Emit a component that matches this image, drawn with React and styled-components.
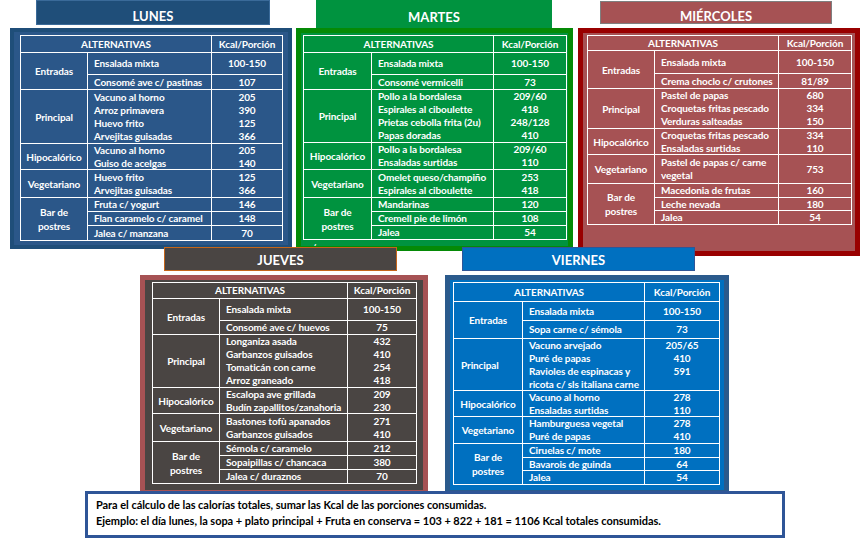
import React from 'react';
import styled, { createGlobalStyle } from 'styled-components';

const GlobalStyle = createGlobalStyle`
  html, body {
    margin: 0;
    padding: 0;
    background: #fff;
  }
  body {
    font-family: Lato, 'Liberation Sans', sans-serif;
  }
`;

const Page = styled.div`
  width: 864px;
  height: 543px;
  overflow: hidden;
  background: #fff;
`;

const TopRow = styled.div`
  display: flex;
  align-items: flex-start;
  padding-left: 10px;
`;

const BottomRow = styled.div`
  display: flex;
  align-items: flex-start;
  padding-left: 140px;
  margin-top: -9px;
`;

const DayBlock = styled.div`
  display: flex;
  flex-direction: column;
  margin-left: ${(p) => p.$ml || 0}px;
`;

const Title = styled.div`
  position: relative;
  z-index: 1;
  box-sizing: border-box;
  width: ${(p) => p.$w}px;
  height: ${(p) => p.$h}px;
  margin: ${(p) => p.$mt || 0}px 0 ${(p) => p.$mb || 0}px ${(p) => p.$off}px;
  padding-top: ${(p) => p.$pt}px;
  background: ${(p) => p.$bg};
  border: ${(p) => (p.$bd ? `1px solid ${p.$bd}` : 'none')};
  display: flex;
  justify-content: center;
  align-items: flex-start;
`;

const TitleText = styled.span`
  display: block;
  color: #fff;
  font: 700 13px/13px Lato, 'Liberation Sans', sans-serif;
  height: ${(p) => (p.$clip ? '11px' : 'auto')};
  overflow: ${(p) => (p.$clip ? 'hidden' : 'visible')};
`;

const Panel = styled.div`
  box-sizing: border-box;
  width: ${(p) => p.$w}px;
  height: ${(p) => p.$h}px;
  background: ${(p) => p.$bg};
  border: ${(p) => p.$bw}px solid ${(p) => p.$bd};
  padding: ${(p) => p.$pad};
  overflow: hidden;
  color: #fff;
  font: 700 10px/13px Lato, 'Liberation Sans', sans-serif;
  letter-spacing: -0.1px;
`;

const Table = styled.div`
  display: grid;
  grid-template-columns: ${(p) => p.$cols};
  grid-template-rows: ${(p) => p.$rows};
  width: max-content;
  border-top: 1px solid #fff;
  border-left: 1px solid #fff;
`;

const Cell = styled.div`
  box-sizing: border-box;
  border-right: 1px solid #fff;
  border-bottom: 1px solid #fff;
  display: flex;
  flex-direction: column;
  justify-content: center;
  min-width: 0;
  line-height: 13px;
`;

const HeadCell = styled(Cell)`
  grid-column: span ${(p) => p.$span};
  align-items: center;
`;

const GroupCell = styled(Cell)`
  grid-column: 1;
  grid-row: span ${(p) => p.$span};
  align-items: ${(p) => (p.$left ? 'flex-start' : 'center')};
  padding-left: ${(p) => (p.$left ? '7px' : '0')};
  text-align: ${(p) => (p.$left ? 'left' : 'center')};
  white-space: pre-line;
  line-height: 14px;
`;

const ItemCell = styled(Cell)`
  grid-column: 2;
  padding-left: 6px;
  white-space: pre-line;
`;

const KcalCell = styled(Cell)`
  grid-column: 3;
  align-items: center;
`;

const Note = styled.div`
  padding: 1px 0 0 4px;
`;

const Footer = styled.div`
  position: relative;
  z-index: 2;
  box-sizing: border-box;
  width: 700px;
  height: 47px;
  margin: -4px 0 0 85px;
  padding: 3px 8px;
  background: #fff;
  border: 3px solid #2f5597;
  color: #000;
  font: 700 11px/16px Lato, 'Liberation Sans', sans-serif;
  letter-spacing: -0.05px;
`;

const ENTRADA = 'Ensalada mixta';

const lunes = {
  title: 'LUNES',
  titleStyle: { $w: 234, $h: 25, $off: 26, $mb: 3, $pt: 9, $bg: '#1f4e79', $bd: '#3a6a99' },
  panel: { $w: 282, $h: 221, $bg: '#2b5789', $bd: '#1f4e79', $bw: 4, $pad: '3px 6px' },
  cols: [67, 124, 71],
  head: 17,
  groups: [
    { label: 'Entradas', rows: [[22, [[ENTRADA, '100-150']]], [15, [['Consomé ave c/ pastinas', '107']]]] },
    {
      label: 'Principal',
      rows: [[54, [['Vacuno al horno', '205'], ['Arroz primavera', '390'], ['Huevo frito', '125'], ['Arvejitas guisadas', '366']]]],
    },
    { label: 'Hipocalórico', rows: [[26, [['Vacuno al horno', '205'], ['Guiso de acelgas', '140']]]] },
    { label: 'Vegetariano', rows: [[28, [['Huevo frito', '125'], ['Arvejitas guisadas', '366']]]] },
    {
      label: 'Bar de\npostres',
      rows: [[14, [['Fruta c/ yogurt', '146']]], [14, [['Flan caramelo c/ caramel', '148']]], [15, [['Jalea  c/ manzana', '70']]]],
    },
  ],
};

const martes = {
  title: 'MARTES',
  clip: true,
  titleStyle: { $w: 236, $h: 28, $off: 20, $pt: 11, $bg: '#00933f' },
  panel: { $w: 277, $h: 223, $bg: '#00933f', $bd: '#058a06', $bw: 5, $pad: '2px 2px' },
  cols: [68, 122, 73],
  head: 17,
  note: 'c/',
  groups: [
    { label: 'Entradas', rows: [[22, [[ENTRADA, '100-150']]], [15, [['Consomé vermicelli', '73']]]] },
    {
      label: 'Principal',
      rows: [
        [53, [['Pollo a la bordalesa', '209/60'], ['Espirales al ciboulette', '418'], ['Prietas cebolla frita (2u)', '248/128'], ['Papas doradas', '410']]],
      ],
    },
    { label: 'Hipocalórico', rows: [[27, [['Pollo a la bordalesa', '209/60'], ['Ensaladas surtidas', '110']]]] },
    { label: 'Vegetariano', rows: [[28, [['Omelet queso/champiño', '253'], ['Espirales al ciboulette', '418']]]] },
    {
      label: 'Bar de\npostres',
      rows: [[14, [['Mandarinas', '120']]], [14, [['Cremell pie de limón', '108']]], [14, [['Jalea', '54']]]],
    },
  ],
};

const miercoles = {
  title: 'MIÉRCOLES',
  titleStyle: { $w: 232, $h: 23, $off: 22, $mt: 1, $mb: 4, $pt: 8, $bg: '#a65254', $bd: '#7f7f7f' },
  panel: { $w: 282, $h: 228, $bg: '#a65254', $bd: '#990000', $bw: 5, $pad: '2px 4px' },
  cols: [67, 124, 73],
  head: 15,
  groups: [
    { label: 'Entradas', rows: [[23, [[ENTRADA, '100-150']]], [15, [['Crema choclo c/ crutones', '81/89']]]] },
    {
      label: 'Principal',
      rows: [[40, [['Pastel de papas', '680'], ['Croquetas fritas pescado', '334'], ['Verduras salteadas', '150']]]],
    },
    { label: 'Hipocalórico', rows: [[26, [['Croquetas fritas pescado', '334'], ['Ensaladas surtidas', '110']]]] },
    { label: 'Vegetariano', rows: [[29, [['Pastel de papas c/ carne\nvegetal', '753']]]] },
    {
      label: 'Bar de\npostres',
      rows: [[14, [['Macedonia de frutas', '160']]], [13, [['Leche nevada', '180']]], [14, [['Jalea', '54']]]],
    },
  ],
};

const jueves = {
  title: 'JUEVES',
  titleStyle: { $w: 233, $h: 24, $off: 24, $mb: 4, $pt: 6, $bg: '#4a4543', $bd: '#c5651a' },
  panel: { $w: 288, $h: 220, $bg: '#4a4543', $bd: '#a65254', $bw: 5, $pad: '2px 7px' },
  cols: [67, 128, 69],
  head: 16,
  groups: [
    { label: 'Entradas', rows: [[22, [[ENTRADA, '100-150']]], [14, [['Consomé ave c/ huevos', '75']]]] },
    {
      label: 'Principal',
      rows: [[53, [['Longaniza asada', '432'], ['Garbanzos guisados', '410'], ['Tomaticán con carne', '254'], ['Arroz graneado', '418']]]],
    },
    { label: 'Hipocalórico', rows: [[26, [['Escalopa ave grillada', '209'], ['Budín zapallitos/zanahoria', '230']]]] },
    { label: 'Vegetariano', rows: [[28, [['Bastones tofù apanados', '271'], ['Garbanzos guisados', '410']]]] },
    {
      label: 'Bar de\npostres',
      rows: [[14, [['Sémola c/ caramelo', '212']]], [14, [['Sopaipillas c/ chancaca', '380']]], [14, [['Jalea c/ duraznos', '70']]]],
    },
  ],
};

const viernes = {
  title: 'VIERNES',
  titleStyle: { $w: 233, $h: 24, $off: 17, $mb: 4, $pt: 6, $bg: '#0070c0', $bd: '#2f5597' },
  panel: { $w: 284, $h: 220, $bg: '#0070c0', $bd: '#2b5a8c', $bw: 5, $pad: '2px 5px 0 3px' },
  cols: [69, 122, 75],
  head: 19,
  groups: [
    { label: 'Entradas', rows: [[19, [[ENTRADA, '100-150']]], [18, [['Sopa carne c/ sémola', '73']]]] },
    {
      label: 'Principal',
      left: true,
      rows: [
        [52, [['Vacuno arvejado', '205/65'], ['Puré de papas', '410'], ['Ravioles de espinacas y', '591'], ['ricota c/ sls italiana carne', '\u00a0']]],
      ],
    },
    { label: 'Hipocalórico', rows: [[26, [['Vacuno al horno', '278'], ['Ensaladas surtidas', '110']]]] },
    { label: 'Vegetariano', rows: [[27, [['Hamburguesa vegetal', '278'], ['Puré de papas', '410']]]] },
    {
      label: 'Bar de\npostres',
      rows: [[14, [['Ciruelas c/ mote', '180']]], [13, [['Bavarois de guinda', '64']]], [14, [['Jalea', '54']]]],
    },
  ],
};

const MenuTable = ({ day }) => {
  const heights = [day.head];
  day.groups.forEach((g) => g.rows.forEach(([h]) => heights.push(h)));
  return (
    <Table $cols={day.cols.map((c) => `${c}px`).join(' ')} $rows={heights.map((h) => `${h}px`).join(' ')}>
      <HeadCell $span={2}>ALTERNATIVAS</HeadCell>
      <HeadCell $span={1}>Kcal/Porción</HeadCell>
      {day.groups.map((g) => (
        <React.Fragment key={g.label}>
          <GroupCell $span={g.rows.length} $left={g.left}>
            {g.label}
          </GroupCell>
          {g.rows.map(([, lines], i) => (
            <React.Fragment key={i}>
              <ItemCell>
                {lines.map(([name], j) => (
                  <div key={j}>{name}</div>
                ))}
              </ItemCell>
              <KcalCell>
                {lines.map(([, kcal], j) => (
                  <div key={j}>{kcal}</div>
                ))}
              </KcalCell>
            </React.Fragment>
          ))}
        </React.Fragment>
      ))}
    </Table>
  );
};

const Day = ({ day, ml }) => (
  <DayBlock $ml={ml}>
    <Title {...day.titleStyle}>
      <TitleText $clip={day.clip}>{day.title}</TitleText>
    </Title>
    <Panel {...day.panel}>
      <MenuTable day={day} />
      {day.note && <Note>{day.note}</Note>}
    </Panel>
  </DayBlock>
);

export default function App() {
  return (
    <Page>
      <GlobalStyle />
      <TopRow>
        <Day day={lunes} />
        <Day day={martes} ml={4} />
        <Day day={miercoles} ml={5} />
      </TopRow>
      <BottomRow>
        <Day day={jueves} />
        <Day day={viernes} ml={17} />
      </BottomRow>
      <Footer>
        <div>Para el cálculo de las calorías totales, sumar las Kcal de las porciones consumidas.</div>
        <div>
          Ejemplo: el día lunes, la sopa + plato principal + Fruta en conserva = 103 + 822 + 181 = 1106 Kcal totales
          consumidas.
        </div>
      </Footer>
    </Page>
  );
}
